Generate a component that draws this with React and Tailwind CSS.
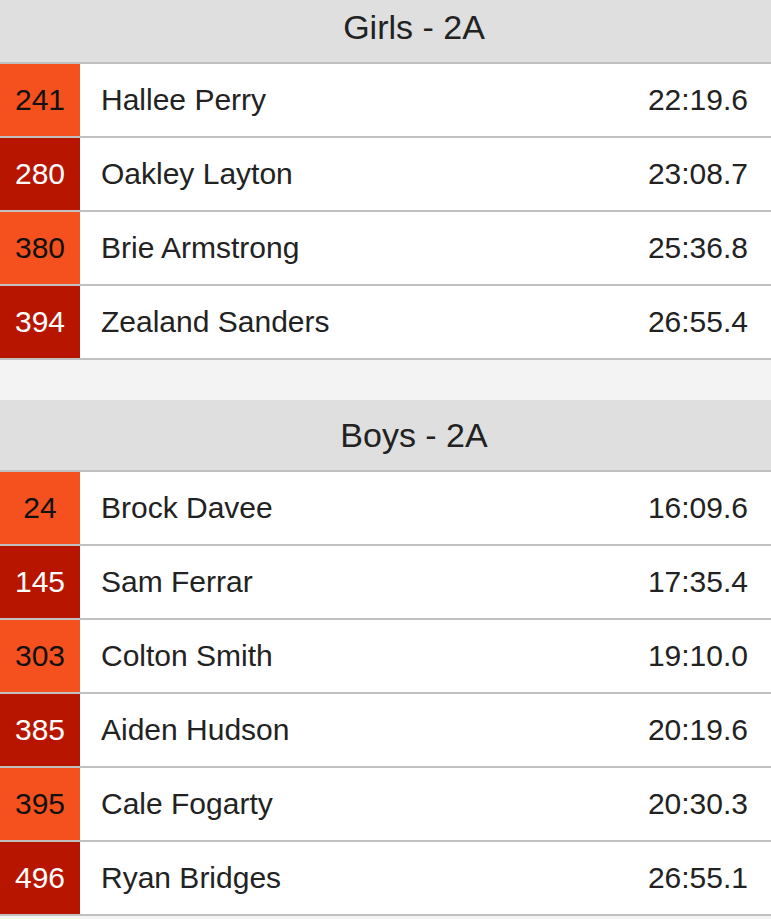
import React from "react";

const girls = [
  ["241", "Hallee Perry", "22:19.6"],
  ["280", "Oakley Layton", "23:08.7"],
  ["380", "Brie Armstrong", "25:36.8"],
  ["394", "Zealand Sanders", "26:55.4"],
];
const boys = [
  ["24", "Brock Davee", "16:09.6"],
  ["145", "Sam Ferrar", "17:35.4"],
  ["303", "Colton Smith", "19:10.0"],
  ["385", "Aiden Hudson", "20:19.6"],
  ["395", "Cale Fogarty", "20:30.3"],
  ["496", "Ryan Bridges", "26:55.1"],
];

function Section({ title, rows }) {
  return (
    <div>
      <div className="h-[72px] flex items-center justify-center pl-[57px] bg-[#dfdfdf] border-b-2 border-[#c0c0c0] text-[34px] text-[#222]">
        {title}
      </div>
      {rows.map((r, i) => (
        <div key={r[0]} className="h-[74px] flex bg-white border-b-2 border-[#c0c0c0]">
          <div
            className={
              i % 2 === 0
                ? "w-[80px] flex items-center justify-center pb-[2px] bg-[#f5511e] text-[#111] text-[30px]"
                : "w-[80px] flex items-center justify-center pb-[2px] bg-[#b71500] text-white text-[30px]"
            }
          >
            {r[0]}
          </div>
          <div className="flex-1 flex items-center pb-[2px] pl-[21px] text-[30px] text-[#222]">{r[1]}</div>
          <div className="flex items-center pb-[2px] pr-[23px] text-[30px] text-[#222]">{r[2]}</div>
        </div>
      ))}
    </div>
  );
}

export default function App() {
  return (
    <div
      className="w-[771px] h-[919px] overflow-hidden bg-[#f3f3f3]"
      style={{ fontFamily: '"Liberation Sans", Arial, sans-serif' }}
    >
      <div className="-mt-2">
        <Section title="Girls - 2A" rows={girls} />
        <div className="h-[40px]" />
        <Section title="Boys - 2A" rows={boys} />
      </div>
    </div>
  );
}
